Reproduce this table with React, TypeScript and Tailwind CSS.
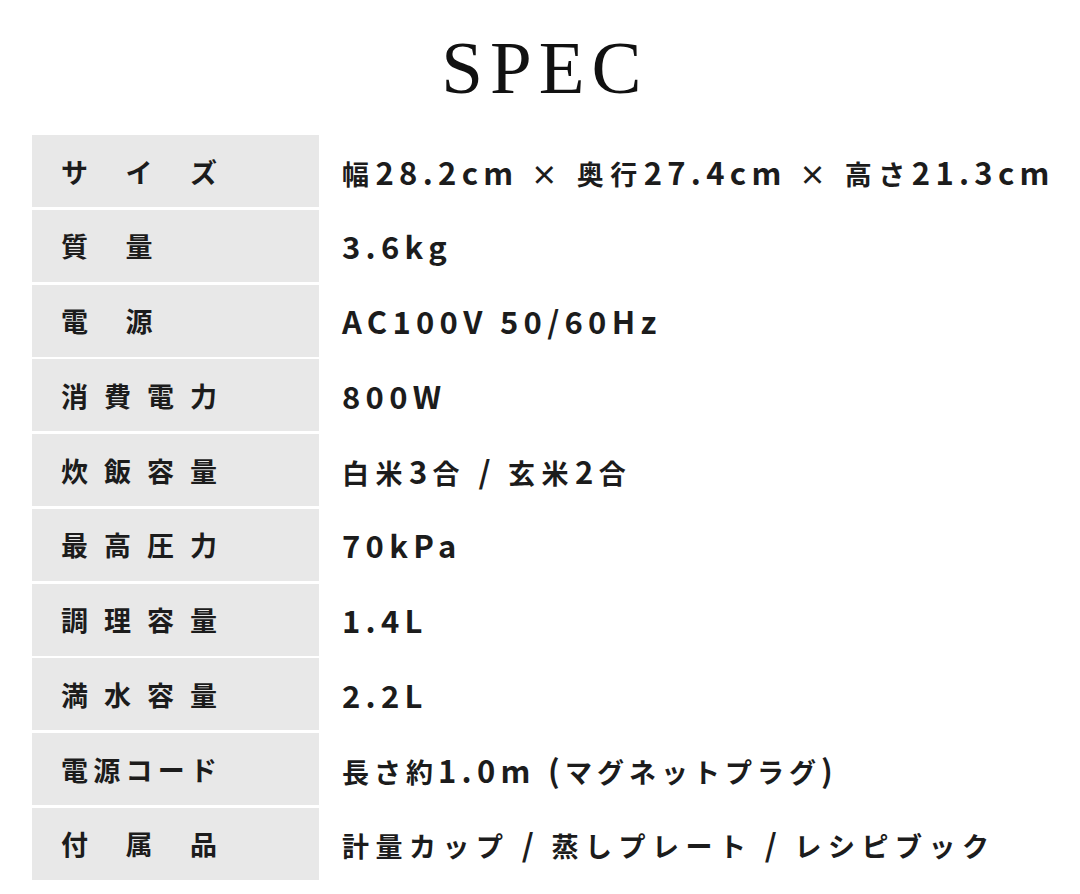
import React from 'react';

type Spec = { label: string[]; value: string; tight?: boolean };

// empty strings keep a blank slot so two-char labels line up with the others
const SPECS: Spec[] = [
  { label: ['サ', 'イ', 'ズ'], value: '幅28.2cm × 奥行27.4cm × 高さ21.3cm' },
  { label: ['質', '量', ''], value: '3.6kg' },
  { label: ['電', '源', ''], value: 'AC100V 50/60Hz' },
  { label: ['消', '費', '電', '力'], value: '800W' },
  { label: ['炊', '飯', '容', '量'], value: '白米3合 / 玄米2合' },
  { label: ['最', '高', '圧', '力'], value: '70kPa' },
  { label: ['調', '理', '容', '量'], value: '1.4L' },
  { label: ['満', '水', '容', '量'], value: '2.2L' },
  { label: ['電', '源', 'コ', 'ー', 'ド'], value: '長さ約1.0m (マグネットプラグ)', tight: true },
  { label: ['付', '属', '品'], value: '計量カップ / 蒸しプレート / レシピブック' },
];

const jp = { fontFamily: '"Noto Sans CJK JP", "Noto Sans", sans-serif' };

// latin runs are set a little larger than the kana/kanji, like the original artwork
const splitRuns = (s: string) => s.match(/[\x20-\x7e]+|[^\x20-\x7e]+/g) ?? [];

const Value: React.FC<{ text: string; tight?: boolean }> = ({ text, tight }) => (
  <>
    {splitRuns(text).map((run, i) =>
      /^[\x20-\x7e]+$/.test(run) ? (
        <span key={i} className="text-[31px] tracking-[5.3px]">{run}</span>
      ) : (
        <span key={i} className={tight ? 'text-[27px] tracking-[5px]' : 'text-[27px] tracking-[6.5px]'}>
          {run}
        </span>
      )
    )}
  </>
);

const SpecRow: React.FC<{ spec: Spec }> = ({ spec }) => (
  <div className="flex items-stretch h-[72px]">
    <div className="w-[287px] shrink-0 bg-[#e8e8e8] flex items-center pl-[29px]">
      <div className="w-[156px] flex justify-between text-[27px] font-bold text-[#1c1c1c] leading-none">
        {spec.label.map((c, i) => (
          <span key={i} className="w-[27px] text-center">{c}</span>
        ))}
      </div>
    </div>
    <div className="flex items-center pl-[23px] font-bold text-[#1c1c1c] whitespace-nowrap leading-none">
      <div className="leading-none">
        <Value text={spec.value} tight={spec.tight} />
      </div>
    </div>
  </div>
);

export default function App() {
  return (
    <div className="w-[1080px] h-[894px] bg-white overflow-hidden" style={jp}>
      <h1
        className="text-center text-[75px] leading-none pt-[30px] pl-[10px] tracking-[7px] text-[#111]"
        style={{ fontFamily: '"Liberation Serif", "Times New Roman", serif' }}
      >
        SPEC
      </h1>
      <div className="flex flex-col gap-[2.75px] pl-[32px] mt-[30px]">
        {SPECS.map((s, i) => (
          <SpecRow key={i} spec={s} />
        ))}
      </div>
    </div>
  );
}
